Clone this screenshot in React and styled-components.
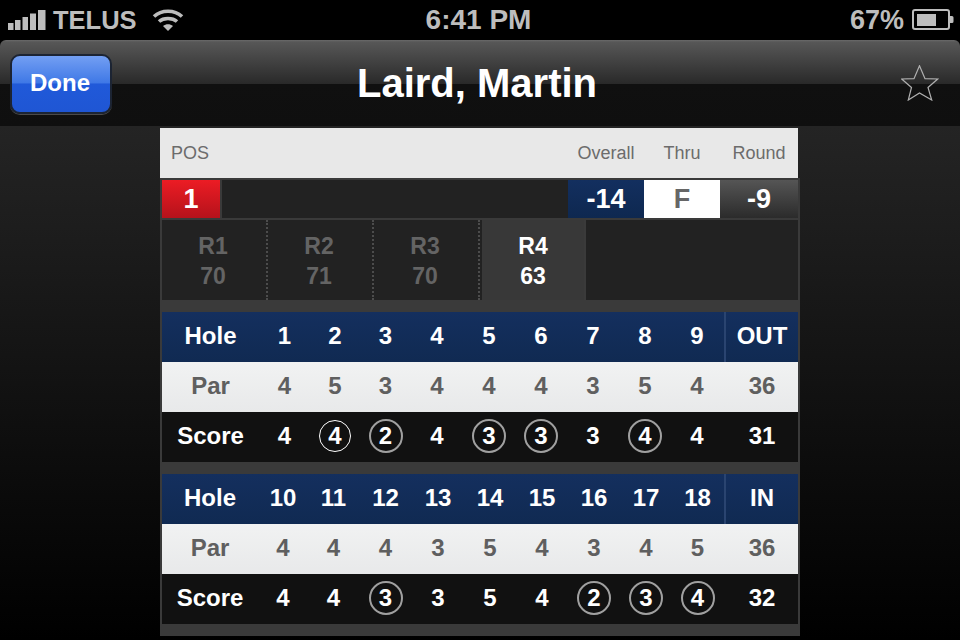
import styled, { createGlobalStyle } from 'styled-components';

const GlobalStyle = createGlobalStyle`
  html, body {
    margin: 0;
    padding: 0;
    background: #000;
  }
  body {
    width: 960px;
    height: 640px;
    overflow: hidden;
    font-family: 'Liberation Sans', Arial, sans-serif;
  }
`;

const FRONT = {
  columns: '97px 51px 50px 51px repeat(6, 52px) 1fr',
  holes: ['1', '2', '3', '4', '5', '6', '7', '8', '9'],
  total: 'OUT',
  par: [4, 5, 3, 4, 4, 4, 3, 5, 4],
  parTotal: 36,
  score: [4, 4, 2, 4, 3, 3, 3, 4, 4],
  circled: [2, 4, 5, 7],
  bright: [1],
  scoreTotal: 31,
};

const BACK = {
  columns: '96px 50px 51px 53px repeat(5, 52px) 51px 1fr',
  holes: ['10', '11', '12', '13', '14', '15', '16', '17', '18'],
  total: 'IN',
  par: [4, 4, 4, 3, 5, 4, 3, 4, 5],
  parTotal: 36,
  score: [4, 4, 3, 3, 5, 4, 2, 3, 4],
  circled: [2, 6, 7, 8],
  bright: [],
  scoreTotal: 32,
};

const ROUNDS = [
  ['R1', 70],
  ['R2', 71],
  ['R3', 70],
  ['R4', 63],
];

const Page = styled.div`
  width: 960px;
  height: 640px;
  overflow: hidden;
  background: #000;
`;

const StatusBar = styled.div`
  height: 40px;
  display: flex;
  align-items: center;
  justify-content: space-between;
  padding: 0 6px 0 8px;
  box-sizing: border-box;
  color: #bdbdbd;
  font-size: 27px;
  font-weight: bold;
`;

const StatusSide = styled.div`
  display: flex;
  align-items: center;
  width: 300px;
  justify-content: ${({ $end }) => ($end ? 'flex-end' : 'flex-start')};
`;

const Carrier = styled.span`
  margin: 0 15px 0 7px;
  font-size: 25.5px;
`;

const Clock = styled.span`
  margin-right: 5px;
  font-size: 28px;
`;

const Percent = styled.span`
  margin-right: 8px;
`;

const NavBar = styled.div`
  height: 86px;
  border-radius: 6px 6px 0 0;
  display: grid;
  grid-template-columns: 1fr auto 1fr;
  align-items: center;
  padding: 0 21px 0 10px;
  box-sizing: border-box;
  background: linear-gradient(#6a6a6a 0, #575757 2px, #292929 44px, #101010 44px, #0f0f0f 100%);
`;

const DoneButton = styled.button`
  width: 102px;
  height: 60px;
  margin-top: 1px;
  padding: 0 2px 2px 0;
  border-radius: 10px;
  border: 2px solid #1c2433;
  box-shadow: 0 1px 0 #4a4a4a;
  background: linear-gradient(#739ff3 0, #3f78e6 48%, #2059d9 50%, #1f56d4 100%);
  color: #fff;
  font-family: inherit;
  font-size: 24px;
  font-weight: bold;
`;

const Title = styled.h1`
  margin: 0 0 0 5px;
  color: #fff;
  font-size: 40px;
  font-weight: bold;
`;

const StarSlot = styled.div`
  display: flex;
  justify-content: flex-end;
`;

const Body = styled.div`
  height: 514px;
  padding: 2px 0 0 160px;
  box-sizing: border-box;
  background: linear-gradient(#242424 0, #000 100%);
`;

const LabelRow = styled.div`
  width: 638px;
  height: 50px;
  display: grid;
  grid-template-columns: 1fr 76px 76px 78px;
  align-items: center;
  background: #e8e8e8;
  color: #6c6c6c;
  font-size: 18px;
  text-align: center;
`;

const PosLabel = styled.span`
  text-align: left;
  padding-left: 11px;
`;

const Panel = styled.div`
  width: 640px;
  height: 458px;
  box-sizing: border-box;
  padding: 2px 2px 0 0;
  background: #3a3a3a;
`;

const ScoreRow = styled.div`
  height: 38px;
  margin: 0 0 2px 2px;
  display: grid;
  grid-template-columns: 58px 1fr 76px 76px 78px;
  font-size: 27px;
  font-weight: bold;
`;

const ScoreCell = styled.div`
  display: flex;
  align-items: center;
  justify-content: center;
  color: ${({ $dark }) => ($dark ? '#666' : '#fff')};
  background: ${({ $bg }) => $bg};
`;

const Spacer = styled.div`
  margin-left: 2px;
  background: #222;
`;

const RoundTabs = styled.div`
  height: 80px;
  margin-left: 2px;
  display: grid;
  grid-template-columns: 106px 106px 106px 106px 1fr;
  background: #222;
`;

const RoundTab = styled.div`
  display: flex;
  flex-direction: column;
  align-items: center;
  justify-content: center;
  gap: 1px;
  box-sizing: border-box;
  padding: 2px ${({ $active }) => ($active ? '0' : '2px')} 0 0;
  margin-left: ${({ $active }) => ($active ? '2px' : '0')};
  font-size: 23px;
  font-weight: bold;
  line-height: 29px;
  color: ${({ $active }) => ($active ? '#fff' : '#646464')};
  background: ${({ $active }) => ($active ? '#383838' : '#222')};
  border-right: 2px ${({ $active }) => ($active ? 'solid #3a3a3a' : 'dotted #4c4c4c')};
`;

const ScoreTable = styled.div`
  margin: 12px 0 0 2px;
`;

const TableRow = styled.div`
  height: 50px;
  box-sizing: border-box;
  padding-bottom: 2px;
  display: grid;
  grid-template-columns: ${({ $columns }) => $columns};
  align-items: center;
  text-align: center;
  font-size: 24px;
  font-weight: bold;
  ${({ $kind }) =>
    $kind === 'hole' &&
    `
    color: #fff;
    background: linear-gradient(#142f5e, #102a52);
  `}
  ${({ $kind }) =>
    $kind === 'par' &&
    `
    color: #5f5f5f;
    background: linear-gradient(#f1f2f2, #e8e9ea);
  `}
  ${({ $kind }) =>
    $kind === 'score' &&
    `
    color: #fff;
    background: #111;
  `}
`;

const Total = styled.div`
  align-self: stretch;
  margin: 0 0 -2px 1px;
  padding-bottom: 2px;
  display: flex;
  align-items: center;
  justify-content: center;
  border-left: 2px solid ${({ $rule }) => ($rule ? '#2a4470' : 'transparent')};
`;

const Mark = styled.span`
  display: inline-flex;
  align-items: center;
  justify-content: center;
  width: ${({ $tone }) => ($tone === 'bright' ? '32px' : '34px')};
  height: ${({ $tone }) => ($tone === 'bright' ? '32px' : '34px')};
  margin: 0 auto;
  box-sizing: border-box;
  border-radius: 50%;
  border-style: solid;
  border-width: ${({ $tone }) => ($tone === 'bright' ? '1.5px' : '2px')};
  border-color: ${({ $tone }) =>
    $tone === 'bright' ? '#fff' : $tone === 'grey' ? '#a0a0a0' : 'transparent'};
`;

const Signal = () => (
  <svg width="38" height="20" viewBox="0 0 38 20" fill="#bdbdbd">
    <rect x="0" y="13" width="5.500" height="7" />
    <rect x="7" y="10" width="5.500" height="10" />
    <rect x="14.500" y="7" width="5.500" height="13" />
    <rect x="22" y="3.500" width="6" height="16.500" />
    <rect x="30" y="0" width="7.500" height="20" />
  </svg>
);

const Wifi = () => (
  <svg width="32" height="24" viewBox="0 0 32 24" fill="none" stroke="#bdbdbd" strokeWidth="3.600">
    <path d="M2 8.500C9.500 1.500 22.500 1.500 30 8.500" />
    <path d="M7 13.500C11.500 9.500 20.500 9.500 25 13.500" />
    <path d="M16 23l-5-5c3-2.200 7-2.200 10 0z" fill="#bdbdbd" stroke="none" />
  </svg>
);

const Battery = () => (
  <svg width="42" height="22" viewBox="0 0 42 22">
    <rect x="1" y="1" width="36" height="19" rx="2" fill="none" stroke="#bdbdbd" strokeWidth="2" />
    <rect x="5" y="5" width="19" height="12" fill="#bdbdbd" />
    <path d="M38 7h2a1.500 1.500 0 0 1 1.500 1.500v4a1.500 1.500 0 0 1-1.500 1.500h-2z" fill="#bdbdbd" />
  </svg>
);

const Star = () => (
  <svg width="38" height="36" viewBox="0 0 38 36" fill="none" stroke="#b0b0b0" strokeWidth="1.200">
    <path d="M18.500.7L24 13.700l12.700.3L27 22.500 30.700 35l-12.200-7-11.200 7 3.200-12.500L.7 14l12.300-.3z" />
  </svg>
);

const toneOf = (data, i) => {
  if (data.bright.includes(i)) return 'bright';
  return data.circled.includes(i) ? 'grey' : 'none';
};

const Holes = ({ data }) => (
  <ScoreTable>
    <TableRow $kind="hole" $columns={data.columns}>
      <span>Hole</span>
      {data.holes.map((hole) => (
        <span key={hole}>{hole}</span>
      ))}
      <Total $rule>{data.total}</Total>
    </TableRow>
    <TableRow $kind="par" $columns={data.columns}>
      <span>Par</span>
      {data.par.map((par, i) => (
        <span key={i}>{par}</span>
      ))}
      <Total>{data.parTotal}</Total>
    </TableRow>
    <TableRow $kind="score" $columns={data.columns}>
      <span>Score</span>
      {data.score.map((score, i) => (
        <Mark key={i} $tone={toneOf(data, i)}>
          {score}
        </Mark>
      ))}
      <Total>{data.scoreTotal}</Total>
    </TableRow>
  </ScoreTable>
);

const App = () => {
  return (
    <Page>
      <GlobalStyle />
      <StatusBar>
        <StatusSide>
          <Signal />
          <Carrier>TELUS</Carrier>
          <Wifi />
        </StatusSide>
        <Clock>6:41 PM</Clock>
        <StatusSide $end>
          <Percent>67%</Percent>
          <Battery />
        </StatusSide>
      </StatusBar>
      <NavBar>
        <div>
          <DoneButton>Done</DoneButton>
        </div>
        <Title>Laird, Martin</Title>
        <StarSlot>
          <Star />
        </StarSlot>
      </NavBar>
      <Body>
        <LabelRow>
          <PosLabel>POS</PosLabel>
          <span>Overall</span>
          <span>Thru</span>
          <span>Round</span>
        </LabelRow>
        <Panel>
          <ScoreRow>
            <ScoreCell $bg="linear-gradient(#ec1c24, #b5121b)">1</ScoreCell>
            <Spacer />
            <ScoreCell $bg="linear-gradient(#132f5f, #0e2850)">-14</ScoreCell>
            <ScoreCell $bg="#fff" $dark>
              F
            </ScoreCell>
            <ScoreCell $bg="linear-gradient(#555, #2b2b2b)">-9</ScoreCell>
          </ScoreRow>
          <RoundTabs>
            {ROUNDS.map(([name, total]) => (
              <RoundTab key={name} $active={name === 'R4'}>
                <span>{name}</span>
                <span>{total}</span>
              </RoundTab>
            ))}
          </RoundTabs>
          <Holes data={FRONT} />
          <Holes data={BACK} />
        </Panel>
      </Body>
    </Page>
  );
};

export default App;
